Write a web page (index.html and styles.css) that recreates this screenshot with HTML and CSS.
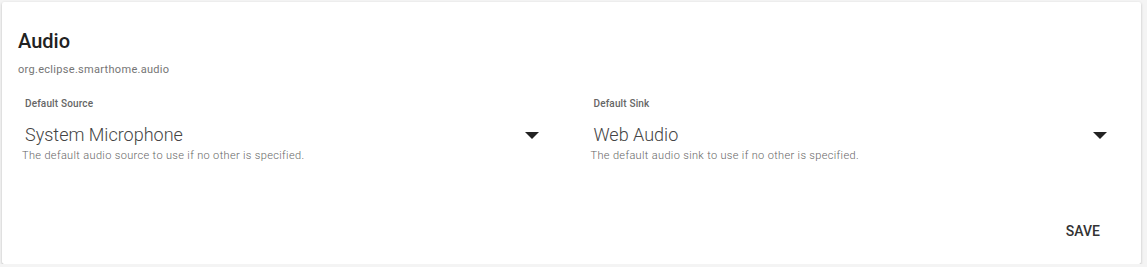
FILE: index.html
```html
<!DOCTYPE html>
<html lang="en">
<head>
    <meta charset="UTF-8">
    <meta name="viewport" content="width=device-width, initial-scale=1.0">
    <link rel="stylesheet" href="styles.css">
    <title>Audio</title>
</head>
<body>
    <div class="card">
        <div class="card-head">
            <h2 class="title">Audio</h2>
            <div class="subtitle">org.eclipse.smarthome.audio</div>
        </div>
        <div class="fields">
            <div class="field">
                <label class="label">Default Source</label>
                <div class="select">
                    <span class="value">System Microphone</span>
                    <span class="arrow"></span>
                </div>
                <div class="hint">The default audio source to use if no other is specified.</div>
            </div>
            <div class="field">
                <label class="label">Default Sink</label>
                <div class="select">
                    <span class="value">Web Audio</span>
                    <span class="arrow"></span>
                </div>
                <div class="hint">The default audio sink to use if no other is specified.</div>
            </div>
        </div>
        <div class="actions">
            <button class="btn">Save</button>
        </div>
    </div>
</body>
</html>
```

FILE: styles.css
```css
body {
    margin: 0;
    padding: 2px 6px 0 2px;
    background-color: #f4f4f4;
    font-family: Roboto, "Liberation Sans", sans-serif;
}

.card {
    background-color: #fff;
    height: 262px;
    box-sizing: border-box;
    border-radius: 2px;
    box-shadow: 0 1px 3px rgba(0, 0, 0, 0.2), 0 1px 1px rgba(0, 0, 0, 0.12);
    display: flex;
    flex-direction: column;
}

.card-head {
    padding: 27px 16px 0 16px;
}

.title {
    margin: 0;
    font-size: 20px;
    font-weight: 500;
    line-height: 24px;
    color: #212121;
}

.subtitle {
    margin-top: 10px;
    font-size: 11px;
    letter-spacing: 0.3px;
    line-height: 14px;
    color: #757575;
}

/* two selects side by side */
.fields {
    display: grid;
    grid-template-columns: 1fr 1fr;
    column-gap: 38px;
    padding: 20px 20px 0 20px;
}

.field {
    padding-right: 14px;
}

.label {
    display: block;
    padding-left: 3px;
    font-size: 10px;
    font-weight: 500;
    letter-spacing: 0.15px;
    line-height: 14px;
    color: #666;
}

.select {
    display: flex;
    justify-content: space-between;
    align-items: center;
    padding: 13px 0 0 3px;
}

.value {
    font-size: 18px;
    font-weight: 300;
    line-height: 22px;
    color: #444;
}

.arrow {
    width: 0;
    height: 0;
    border-left: 7px solid transparent;
    border-right: 7px solid transparent;
    border-top: 7px solid #222;
}

.hint {
    margin-top: 3px;
    font-size: 11px;
    font-weight: 300;
    letter-spacing: 0.35px;
    line-height: 14px;
    color: #666;
}

.actions {
    margin-top: auto;
    display: flex;
    justify-content: flex-end;
    padding: 0 25px 19px 0;
}

.btn {
    background: none;
    border: none;
    padding: 6px 16px;
    font-family: Roboto, "Liberation Sans", sans-serif;
    font-size: 14px;
    font-weight: 500;
    text-transform: uppercase;
    color: #333;
}
```
